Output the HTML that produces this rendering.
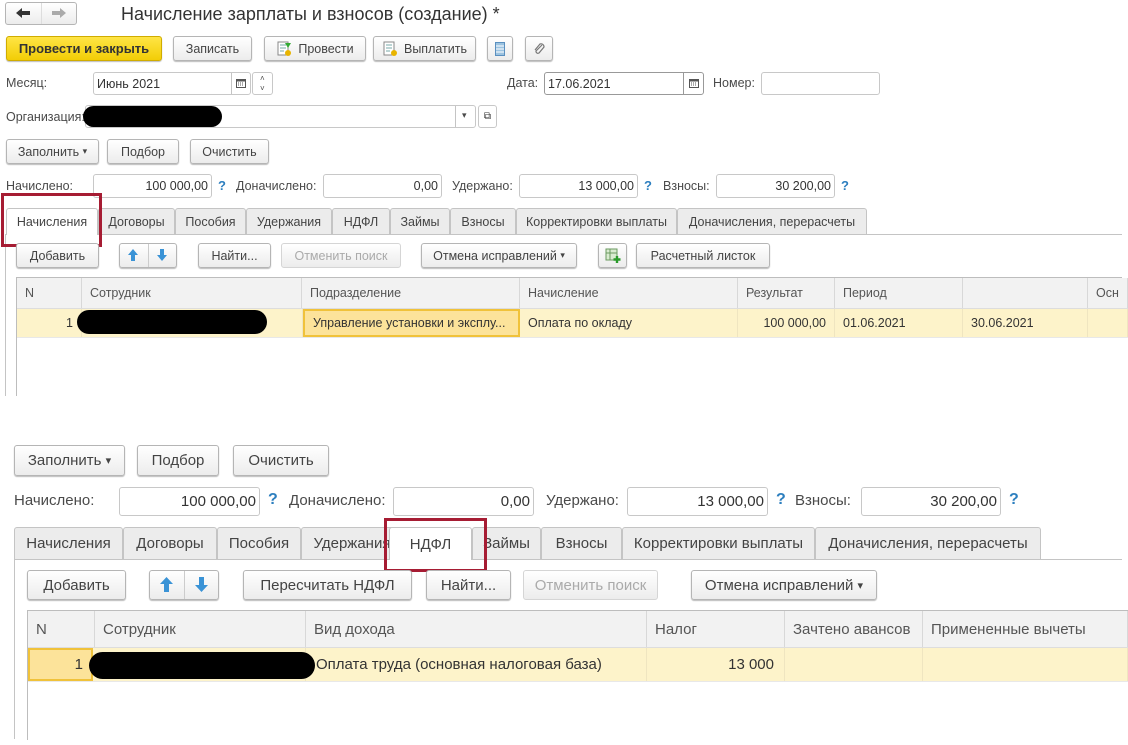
<!DOCTYPE html>
<html><head><meta charset="utf-8"><style>
*{box-sizing:border-box;margin:0;padding:0}
body{width:1128px;height:745px;background:#fff;position:relative;overflow:hidden;font-family:"Liberation Sans",Arial,sans-serif;color:#4a4a4a}
.a{position:absolute;white-space:nowrap}
.btn{position:absolute;border:1px solid #b5b5b5;border-radius:3px;background:linear-gradient(#fff,#ececec);box-shadow:0 1px 1px #bbb;display:flex;align-items:center;justify-content:center;color:#444;white-space:nowrap}
.inp{position:absolute;border:1px solid #c8c8c8;border-radius:3px;background:#fff;display:flex;align-items:center;color:#333;white-space:nowrap;padding:0 3px}
.r{justify-content:flex-end}
.q{position:absolute;color:#2d7fbf;font-weight:bold}
.tab{position:absolute;border:1px solid #c4c4c4;border-bottom:none;background:#ececec;display:flex;align-items:center;justify-content:center;color:#444;white-space:nowrap;border-radius:3px 3px 0 0}
.tab.act{background:#fff}
.red{position:absolute;border:3px solid #a61c33}
.th{position:absolute;background:#f2f2f2;border-right:1px solid #d8d8d8;display:flex;align-items:center;color:#555;padding-left:8px;white-space:nowrap;overflow:hidden}
.td{position:absolute;background:#fdf3ca;border-right:1px solid #efe5c0;display:flex;align-items:center;color:#333;padding:0 8px;white-space:nowrap;overflow:hidden}
.blk{position:absolute;background:#000;border-radius:12px}
.line{position:absolute;background:#c4c4c4}
.s{font-size:12.5px}
.b{font-size:15px}
</style></head><body>

<!-- Top nav -->
<div class="btn" style="left:5px;top:2px;width:72px;height:23px;box-shadow:none"></div>
<div class="line" style="left:41px;top:3px;width:1px;height:21px;background:#ddd"></div>
<svg class="a" style="left:15px;top:7px" width="16" height="12"><path d="M1 6 L7 1 L7 4 L15 4 L15 8 L7 8 L7 11 Z" fill="#333"/></svg>
<svg class="a" style="left:51px;top:7px" width="16" height="12"><path d="M15 6 L9 1 L9 4 L1 4 L1 8 L9 8 L9 11 Z" fill="#aaa"/></svg>
<div class="a" style="left:121px;top:4px;font-size:18px;color:#333">Начисление зарплаты и взносов (создание) *</div>

<!-- Toolbar -->
<div class="btn" style="left:6px;top:36px;width:156px;height:25px;background:linear-gradient(#ffe545,#f2cd06);border-color:#d0ac00;font-weight:bold;font-size:13px;color:#333">Провести и закрыть</div>
<div class="btn s" style="left:173px;top:36px;width:79px;height:25px">Записать</div>
<div class="btn s" style="left:264px;top:36px;width:102px;height:25px"><svg width="16" height="16" style="margin-right:6px"><rect x="2" y="1" width="10" height="13" fill="#fff" stroke="#888"/><path d="M4 4h6M4 7h6M4 10h4" stroke="#7aa"/><path d="M9 2 L15 2 L12 7Z" fill="#3a3"/><circle cx="12" cy="12" r="3" fill="#e8b400"/></svg>Провести</div>
<div class="btn s" style="left:373px;top:36px;width:103px;height:25px"><svg width="16" height="16" style="margin-right:6px"><rect x="2" y="1" width="10" height="13" fill="#fff" stroke="#888"/><path d="M4 4h6M4 7h6M4 10h4" stroke="#7aa"/><circle cx="12" cy="12" r="3" fill="#e8b400"/></svg>Выплатить</div>
<div class="btn" style="left:487px;top:36px;width:26px;height:25px"><svg width="10" height="14"><rect x="0.5" y="0.5" width="9" height="13" fill="#9cc3e0" stroke="#5a8fbf"/><path d="M1 4h8M1 7h8M1 10h8" stroke="#fff"/></svg></div>
<div class="btn" style="left:525px;top:36px;width:28px;height:25px"><svg width="14" height="14"><path d="M10 3 L4 9 A2 2 0 0 0 7 11 L12 5 A3 3 0 0 0 8 2 L3 8" fill="none" stroke="#777" stroke-width="1.2"/></svg></div>

<!-- Месяц row -->
<div class="a s" style="left:6px;top:76px">Месяц:</div>
<div class="inp s" style="left:93px;top:72px;width:158px;height:23px">Июнь 2021</div>
<div class="line" style="left:231px;top:73px;width:1px;height:21px"></div>
<svg class="a" style="left:236px;top:78px" width="10" height="10"><rect x="0.5" y="1.5" width="9" height="8" fill="none" stroke="#555"/><rect x="0.5" y="1.5" width="9" height="2" fill="#555"/><path d="M2 5h1M4 5h1M6 5h1M2 7h1M4 7h1M6 7h1" stroke="#555"/></svg>
<div class="inp" style="left:252px;top:72px;width:21px;height:23px"></div>
<div class="a" style="left:260px;top:74px;font-size:8px">˄</div><div class="a" style="left:260px;top:84px;font-size:8px">˅</div>
<div class="a s" style="left:507px;top:76px">Дата:</div>
<div class="inp s" style="left:544px;top:72px;width:160px;height:23px;border-color:#999">17.06.2021</div>
<div class="line" style="left:683px;top:73px;width:1px;height:21px;background:#999"></div>
<svg class="a" style="left:689px;top:78px" width="10" height="10"><rect x="0.5" y="1.5" width="9" height="8" fill="none" stroke="#555"/><rect x="0.5" y="1.5" width="9" height="2" fill="#555"/><path d="M2 5h1M4 5h1M6 5h1M2 7h1M4 7h1M6 7h1" stroke="#555"/></svg>
<div class="a s" style="left:713px;top:76px">Номер:</div>
<div class="inp" style="left:761px;top:72px;width:119px;height:23px"></div>

<!-- Организация -->
<div class="a s" style="left:6px;top:110px">Организация:</div>
<div class="inp" style="left:85px;top:105px;width:391px;height:23px"></div>
<div class="line" style="left:455px;top:106px;width:1px;height:21px"></div>
<div class="a" style="left:462px;top:110px;font-size:9px">▾</div>
<div class="inp" style="left:478px;top:105px;width:19px;height:23px;font-size:10px;justify-content:center">⧉</div>
<div class="blk" style="left:83px;top:106px;width:139px;height:21px"></div>

<!-- Заполнить -->
<div class="btn s" style="left:6px;top:139px;width:93px;height:25px">Заполнить&nbsp;<span style="font-size:9px">▾</span></div>
<div class="btn s" style="left:107px;top:139px;width:72px;height:25px">Подбор</div>
<div class="btn s" style="left:190px;top:139px;width:79px;height:25px">Очистить</div>

<!-- Totals -->
<div class="a s" style="left:6px;top:179px">Начислено:</div>
<div class="inp r s" style="left:93px;top:174px;width:119px;height:24px">100 000,00</div>
<div class="q" style="left:218px;top:178px;font-size:13px">?</div>
<div class="a s" style="left:236px;top:179px">Доначислено:</div>
<div class="inp r s" style="left:323px;top:174px;width:119px;height:24px">0,00</div>
<div class="a s" style="left:452px;top:179px">Удержано:</div>
<div class="inp r s" style="left:519px;top:174px;width:119px;height:24px">13 000,00</div>
<div class="q" style="left:644px;top:178px;font-size:13px">?</div>
<div class="a s" style="left:663px;top:179px">Взносы:</div>
<div class="inp r s" style="left:716px;top:174px;width:119px;height:24px">30 200,00</div>
<div class="q" style="left:841px;top:178px;font-size:13px">?</div>

<!-- Tabs top -->
<div class="line" style="left:6px;top:234px;width:1116px;height:1px"></div>
<div class="line" style="left:5px;top:234px;width:1px;height:162px"></div>
<div class="tab act s" style="left:6px;top:208px;width:92px;height:27px">Начисления</div>
<div class="tab s" style="left:98px;top:208px;width:77px;height:26px">Договоры</div>
<div class="tab s" style="left:175px;top:208px;width:71px;height:26px">Пособия</div>
<div class="tab s" style="left:246px;top:208px;width:86px;height:26px">Удержания</div>
<div class="tab s" style="left:332px;top:208px;width:58px;height:26px">НДФЛ</div>
<div class="tab s" style="left:390px;top:208px;width:60px;height:26px">Займы</div>
<div class="tab s" style="left:450px;top:208px;width:66px;height:26px">Взносы</div>
<div class="tab s" style="left:516px;top:208px;width:161px;height:26px">Корректировки выплаты</div>
<div class="tab s" style="left:677px;top:208px;width:190px;height:26px">Доначисления, перерасчеты</div>
<div class="red" style="left:1px;top:193px;width:101px;height:54px"></div>

<div class="btn s" style="left:16px;top:243px;width:83px;height:25px">Добавить</div>
<div class="btn" style="left:119px;top:243px;width:58px;height:25px"></div>
<div class="line" style="left:148px;top:244px;width:1px;height:23px;background:#ccc"></div>
<svg class="a" style="left:127px;top:248px" width="12" height="14"><path d="M6 1 L11 7 L8 7 L8 13 L4 13 L4 7 L1 7Z" fill="#3a93d6"/></svg>
<svg class="a" style="left:156px;top:248px" width="12" height="14"><path d="M6 13 L11 7 L8 7 L8 1 L4 1 L4 7 L1 7Z" fill="#3a93d6"/></svg>
<div class="btn s" style="left:198px;top:243px;width:73px;height:25px">Найти...</div>
<div class="btn s" style="left:281px;top:243px;width:120px;height:25px;color:#aaa;border-color:#d5d5d5;box-shadow:none">Отменить поиск</div>
<div class="btn s" style="left:421px;top:243px;width:156px;height:25px">Отмена исправлений&nbsp;<span style="font-size:9px">▾</span></div>
<div class="btn" style="left:598px;top:243px;width:29px;height:25px"><svg width="16" height="15"><rect x="1" y="1" width="11" height="11" fill="#d9ebd0" stroke="#6a9a60"/><path d="M1 5h11M5 1v11" stroke="#6a9a60"/><path d="M12 8v7M8.5 11.5h7" stroke="#2a9a2a" stroke-width="2.4"/></svg></div>
<div class="btn s" style="left:636px;top:243px;width:134px;height:25px">Расчетный листок</div>

<!-- Table top -->
<div class="line" style="left:16px;top:277px;width:1106px;height:1px;background:#bdbdbd"></div>
<div class="line" style="left:16px;top:277px;width:1px;height:119px;background:#bdbdbd"></div>
<div class="th s" style="left:17px;top:278px;width:65px;height:30px">N</div>
<div class="th s" style="left:82px;top:278px;width:220px;height:30px">Сотрудник</div>
<div class="th s" style="left:302px;top:278px;width:218px;height:30px">Подразделение</div>
<div class="th s" style="left:520px;top:278px;width:218px;height:30px">Начисление</div>
<div class="th s" style="left:738px;top:278px;width:97px;height:30px">Результат</div>
<div class="th s" style="left:835px;top:278px;width:128px;height:30px">Период</div>
<div class="th s" style="left:963px;top:278px;width:125px;height:30px"></div>
<div class="th s" style="left:1088px;top:278px;width:40px;height:30px">Осн</div>
<div class="line" style="left:17px;top:308px;width:1111px;height:1px;background:#ddd"></div>
<div class="td r s" style="left:17px;top:309px;width:65px;height:28px">1</div>
<div class="td" style="left:82px;top:309px;width:221px;height:28px"></div>
<div class="td s" style="left:303px;top:309px;width:217px;height:28px;background:#fce39a;border:2px solid #f0c23a">Управление установки и эксплу...</div>
<div class="td s" style="left:520px;top:309px;width:218px;height:28px">Оплата по окладу</div>
<div class="td r s" style="left:738px;top:309px;width:97px;height:28px">100 000,00</div>
<div class="td s" style="left:835px;top:309px;width:128px;height:28px">01.06.2021</div>
<div class="td s" style="left:963px;top:309px;width:125px;height:28px">30.06.2021</div>
<div class="td" style="left:1088px;top:309px;width:40px;height:28px"></div>
<div class="line" style="left:17px;top:337px;width:1111px;height:1px;background:#e8e8e8"></div>
<div class="blk" style="left:77px;top:310px;width:190px;height:24px"></div>

<!-- ===== Bottom section ===== -->
<div class="btn b" style="left:14px;top:445px;width:111px;height:31px">Заполнить&nbsp;<span style="font-size:11px">▾</span></div>
<div class="btn b" style="left:137px;top:445px;width:82px;height:31px">Подбор</div>
<div class="btn b" style="left:233px;top:445px;width:96px;height:31px">Очистить</div>

<div class="a b" style="left:14px;top:492px">Начислено:</div>
<div class="inp r b" style="left:119px;top:487px;width:141px;height:29px">100 000,00</div>
<div class="q" style="left:268px;top:491px;font-size:16px">?</div>
<div class="a b" style="left:289px;top:492px">Доначислено:</div>
<div class="inp r b" style="left:393px;top:487px;width:141px;height:29px">0,00</div>
<div class="a b" style="left:546px;top:492px">Удержано:</div>
<div class="inp r b" style="left:627px;top:487px;width:141px;height:29px">13 000,00</div>
<div class="q" style="left:776px;top:491px;font-size:16px">?</div>
<div class="a b" style="left:795px;top:492px">Взносы:</div>
<div class="inp r b" style="left:861px;top:487px;width:140px;height:29px">30 200,00</div>
<div class="q" style="left:1009px;top:491px;font-size:16px">?</div>

<div class="line" style="left:14px;top:559px;width:1108px;height:1px"></div>
<div class="line" style="left:14px;top:559px;width:1px;height:180px"></div>
<div class="tab b" style="left:14px;top:527px;width:109px;height:32px">Начисления</div>
<div class="tab b" style="left:123px;top:527px;width:94px;height:32px">Договоры</div>
<div class="tab b" style="left:217px;top:527px;width:84px;height:32px">Пособия</div>
<div class="tab b" style="left:301px;top:527px;width:102px;height:32px">Удержания</div>
<div class="tab b" style="left:472px;top:527px;width:69px;height:32px">Займы</div>
<div class="tab b" style="left:541px;top:527px;width:81px;height:32px">Взносы</div>
<div class="tab b" style="left:622px;top:527px;width:193px;height:32px">Корректировки выплаты</div>
<div class="tab b" style="left:815px;top:527px;width:226px;height:32px">Доначисления, перерасчеты</div>
<div class="tab act b" style="left:389px;top:527px;width:83px;height:33px">НДФЛ</div>
<div class="red" style="left:384px;top:518px;width:103px;height:54px"></div>

<div class="btn b" style="left:27px;top:570px;width:99px;height:30px">Добавить</div>
<div class="btn" style="left:149px;top:570px;width:70px;height:30px"></div>
<div class="line" style="left:184px;top:571px;width:1px;height:28px;background:#ccc"></div>
<svg class="a" style="left:159px;top:576px" width="15" height="17"><path d="M7.5 1 L14 8 L10 8 L10 16 L5 16 L5 8 L1 8Z" fill="#3a93d6"/></svg>
<svg class="a" style="left:194px;top:576px" width="15" height="17"><path d="M7.5 16 L14 9 L10 9 L10 1 L5 1 L5 9 L1 9Z" fill="#3a93d6"/></svg>
<div class="btn b" style="left:243px;top:570px;width:169px;height:30px">Пересчитать НДФЛ</div>
<div class="btn b" style="left:426px;top:570px;width:85px;height:30px">Найти...</div>
<div class="btn b" style="left:523px;top:570px;width:135px;height:30px;color:#aaa;border-color:#d5d5d5;box-shadow:none">Отменить поиск</div>
<div class="btn b" style="left:691px;top:570px;width:186px;height:30px">Отмена исправлений&nbsp;<span style="font-size:11px">▾</span></div>

<div class="line" style="left:27px;top:610px;width:1101px;height:1px;background:#bdbdbd"></div>
<div class="line" style="left:27px;top:610px;width:1px;height:130px;background:#bdbdbd"></div>
<div class="th b" style="left:28px;top:611px;width:67px;height:36px">N</div>
<div class="th b" style="left:95px;top:611px;width:211px;height:36px">Сотрудник</div>
<div class="th b" style="left:306px;top:611px;width:341px;height:36px">Вид дохода</div>
<div class="th b" style="left:647px;top:611px;width:138px;height:36px">Налог</div>
<div class="th b" style="left:785px;top:611px;width:138px;height:36px">Зачтено авансов</div>
<div class="th b" style="left:923px;top:611px;width:205px;height:36px">Примененные вычеты</div>
<div class="line" style="left:28px;top:647px;width:1100px;height:1px;background:#ddd"></div>
<div class="td r b" style="left:28px;top:648px;width:65px;height:33px;background:#fce39a;border:2px solid #f0c23a">1</div>
<div class="td" style="left:93px;top:648px;width:213px;height:33px"></div>
<div class="td b" style="left:306px;top:648px;width:341px;height:33px;padding-left:10px">Оплата труда (основная налоговая база)</div>
<div class="td r b" style="left:647px;top:648px;width:138px;height:33px;padding-right:10px">13 000</div>
<div class="td" style="left:785px;top:648px;width:138px;height:33px"></div>
<div class="td" style="left:923px;top:648px;width:205px;height:33px"></div>
<div class="line" style="left:28px;top:681px;width:1100px;height:1px;background:#e8e8e8"></div>
<div class="blk" style="left:89px;top:652px;width:226px;height:27px;border-radius:14px"></div>

</body></html>
